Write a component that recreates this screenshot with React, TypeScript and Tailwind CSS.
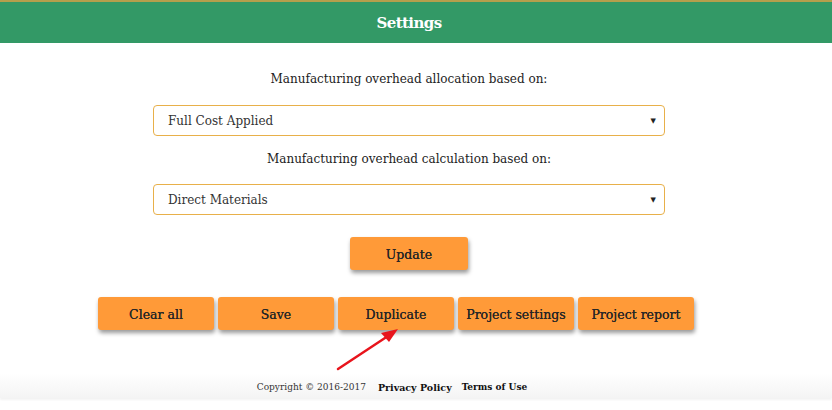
const font = { fontFamily: '"DejaVu Serif", "Liberation Serif", serif' };

const actions = ["Clear all", "Save", "Duplicate", "Project settings", "Project report"];

function Select({ value }: { value: string }) {
  return (
    <div className="w-[512px] h-[31px] border border-[#e8b04a] rounded-[4px] bg-white flex items-center justify-between pl-[14px] pr-[8px] pt-[1px] text-[12px] text-[#333]">
      <span>{value}</span>
      <span className="text-[7px] text-[#222]">▼</span>
    </div>
  );
}

function OrangeButton({ label, className }: { label: string; className?: string }) {
  return (
    <button
      className={
        "h-[33px] pt-[3px] rounded-[3px] bg-[#ff9a38] text-[12.5px] text-[#262626] [text-shadow:0_0_0.4px_#262626] shadow-[1px_3px_4px_rgba(0,0,0,0.4)] " +
        (className ?? "")
      }
    >
      {label}
    </button>
  );
}

export default function App() {
  return (
    <div className="relative w-[832px] h-[410px] bg-white overflow-hidden" style={font}>
      <div className="h-[2px] bg-[#b59f4c]" />
      <header className="h-[41px] bg-[#339966] flex items-center justify-center pr-[14px] pt-[1px]">
        <h1 className="text-[15px] font-bold text-white tracking-[-0.6px]">Settings</h1>
      </header>

      <main className="flex flex-col items-center pr-[14px]">
        <p className="mt-[27px] text-[12px] text-[#222]">Manufacturing overhead allocation based on:</p>
        <div className="mt-[17px]">
          <Select value="Full Cost Applied" />
        </div>
        <p className="mt-[14px] text-[12px] text-[#222]">Manufacturing overhead calculation based on:</p>
        <div className="mt-[16px]">
          <Select value="Direct Materials" />
        </div>
        <OrangeButton label="Update" className="mt-[22px] w-[118px]" />
        <div className="mt-[27px] mr-[26px] flex gap-[4px]">
          {actions.map((a) => (
            <OrangeButton key={a} label={a} className="w-[116px]" />
          ))}
        </div>
      </main>

      <footer className="absolute left-0 right-0 top-[373px] h-[25px] pt-[5px] bg-gradient-to-b from-white to-[#f4f4f4] shadow-[0_2px_2px_rgba(0,0,0,0.05)] flex items-center justify-center pr-[48px] text-[#333]">
        <span className="text-[9px]">Copyright © 2016-2017</span>
        <span className="ml-[12px] text-[9.5px] font-semibold text-[#111]">Privacy Policy</span>
        <span className="ml-[10px] text-[9px] font-semibold text-[#111]">Terms of Use</span>
      </footer>

      <svg className="absolute left-0 top-0 pointer-events-none" width="832" height="410">
        <line x1="338" y1="369" x2="388" y2="336" stroke="#e8141c" strokeWidth="2.5" strokeLinecap="round" />
        <polygon points="398,329 381,333 389,342" fill="#e8141c" />
      </svg>
    </div>
  );
}
